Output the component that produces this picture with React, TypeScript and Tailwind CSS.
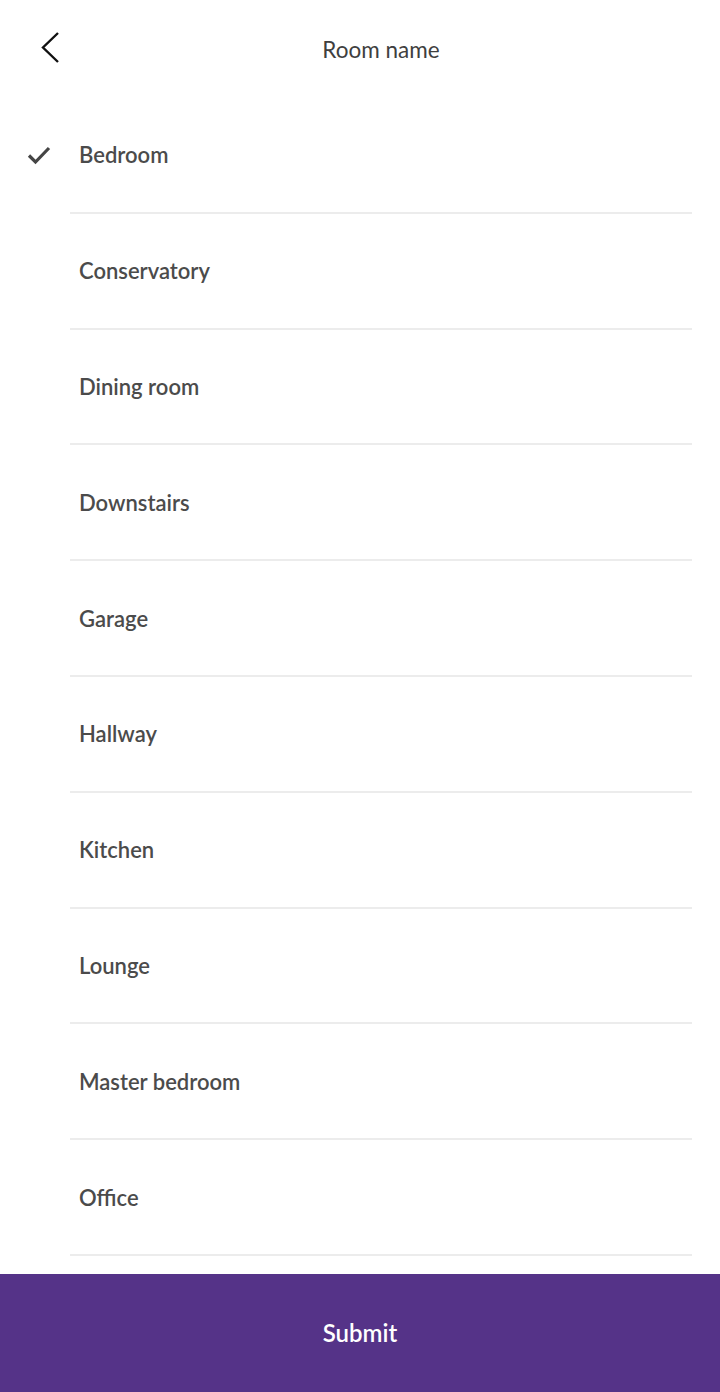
import { useState } from "react";

const rooms = [
  "Bedroom",
  "Conservatory",
  "Dining room",
  "Downstairs",
  "Garage",
  "Hallway",
  "Kitchen",
  "Lounge",
  "Master bedroom",
  "Office",
];

function Check() {
  return (
    <svg width="24" height="20" viewBox="0 0 24 20" fill="none">
      <path d="M2 10.5l6.5 6.5L22 3" stroke="#454545" strokeWidth="3.2" />
    </svg>
  );
}

export default function App() {
  const [selected, setSelected] = useState("Bedroom");

  return (
    <div
      className="w-[720px] h-[1392px] bg-white flex flex-col overflow-hidden text-[#4a4a4a]"
      style={{ fontFamily: "Lato, 'Noto Sans', sans-serif" }}
    >
      <header className="h-[98px] shrink-0 flex items-center pl-[38px] pr-[24px] pb-[2px]">
        <button className="w-[24px] h-[34px] flex items-center justify-center">
          <svg width="22" height="34" viewBox="0 0 22 34" fill="none">
            <path d="M19 2L4 16.5L19 31" stroke="#111" strokeWidth="2.4" />
          </svg>
        </button>
        <h1 className="flex-1 text-center text-[22.5px] text-[#3f3f3f] pl-[4px] pt-[3px]">
          Room name
        </h1>
      </header>

      <ul className="flex-1 overflow-hidden">
        {rooms.map((room) => (
          <li key={room} className="flex h-[115.8px]">
            <button
              onClick={() => setSelected(room)}
              className="w-[70px] shrink-0 flex items-center justify-center pb-[2px] pl-[8px]"
            >
              {selected === room && <Check />}
            </button>
            <div className="flex-1 mr-[28px] flex items-center pl-[9px] border-b-2 border-[#ececec]">
              <span className="text-[22px] font-semibold text-[#4b4b4b]">
                {room}
              </span>
            </div>
          </li>
        ))}
      </ul>

      <button className="h-[118px] shrink-0 bg-[#553388] text-white text-[24px] font-semibold flex items-center justify-center">
        Submit
      </button>
    </div>
  );
}
